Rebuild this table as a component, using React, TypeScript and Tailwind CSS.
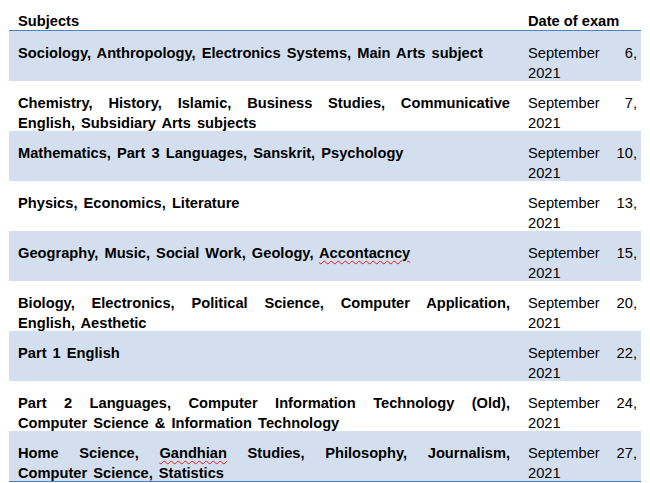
const rows = [
  { subjects: "Sociology, Anthropology, Electronics Systems, Main Arts subject", day: "6" },
  { subjects: "Chemistry, History, Islamic, Business Studies, Communicative English, Subsidiary Arts subjects", day: "7" },
  { subjects: "Mathematics, Part 3 Languages, Sanskrit, Psychology", day: "10" },
  { subjects: "Physics, Economics, Literature", day: "13" },
  { subjects: "Geography, Music, Social Work, Geology, ", misspelt: "Accontacncy", day: "15" },
  { subjects: "Biology, Electronics, Political Science, Computer Application, English, Aesthetic", day: "20" },
  { subjects: "Part 1 English", day: "22" },
  { subjects: "Part 2 Languages, Computer Information Technology (Old), Computer Science & Information Technology", day: "24" },
  { subjects: "Home Science, ", misspelt: "Gandhian", after: " Studies, Philosophy, Journalism, Computer Science, Statistics", day: "27" },
];

const Squiggle = ({ children }: { children: string }) => (
  <span className="underline decoration-wavy decoration-[#e01b1b] decoration-1 underline-offset-[2px]">{children}</span>
);

export default function App() {
  return (
    <div className="w-[650px] h-[483px] bg-white pl-[9px] font-['Liberation_Sans',Arial,sans-serif] text-[14.67px] leading-[20px] text-black">
      <div className="w-[632px]">
        <div className="grid grid-cols-[510px_122px] h-[31px] border-b border-[#4f81bd] font-bold">
          <div className="pl-[9px] pt-[11px]">Subjects</div>
          <div className="pl-[9px] pt-[11px]">Date of exam</div>
        </div>
        {rows.map((r, i) => (
          <div
            key={i}
            className={`grid grid-cols-[510px_122px] ${i % 2 === 0 ? "bg-[#d3dfee]" : "bg-white"} ${i === rows.length - 1 ? "border-b border-[#4f81bd] h-[51px]" : "h-[50px]"}`}
          >
            <div className="pl-[9px] pr-[9px] pt-[12px] font-bold text-justify [word-spacing:2px]">
              {r.subjects}
              {r.misspelt && <Squiggle>{r.misspelt}</Squiggle>}
              {r.after}
            </div>
            <div className="pl-[9px] pr-[4px] pt-[12px] text-justify">
              September {r.day}, 2021
            </div>
          </div>
        ))}
      </div>
    </div>
  );
}
